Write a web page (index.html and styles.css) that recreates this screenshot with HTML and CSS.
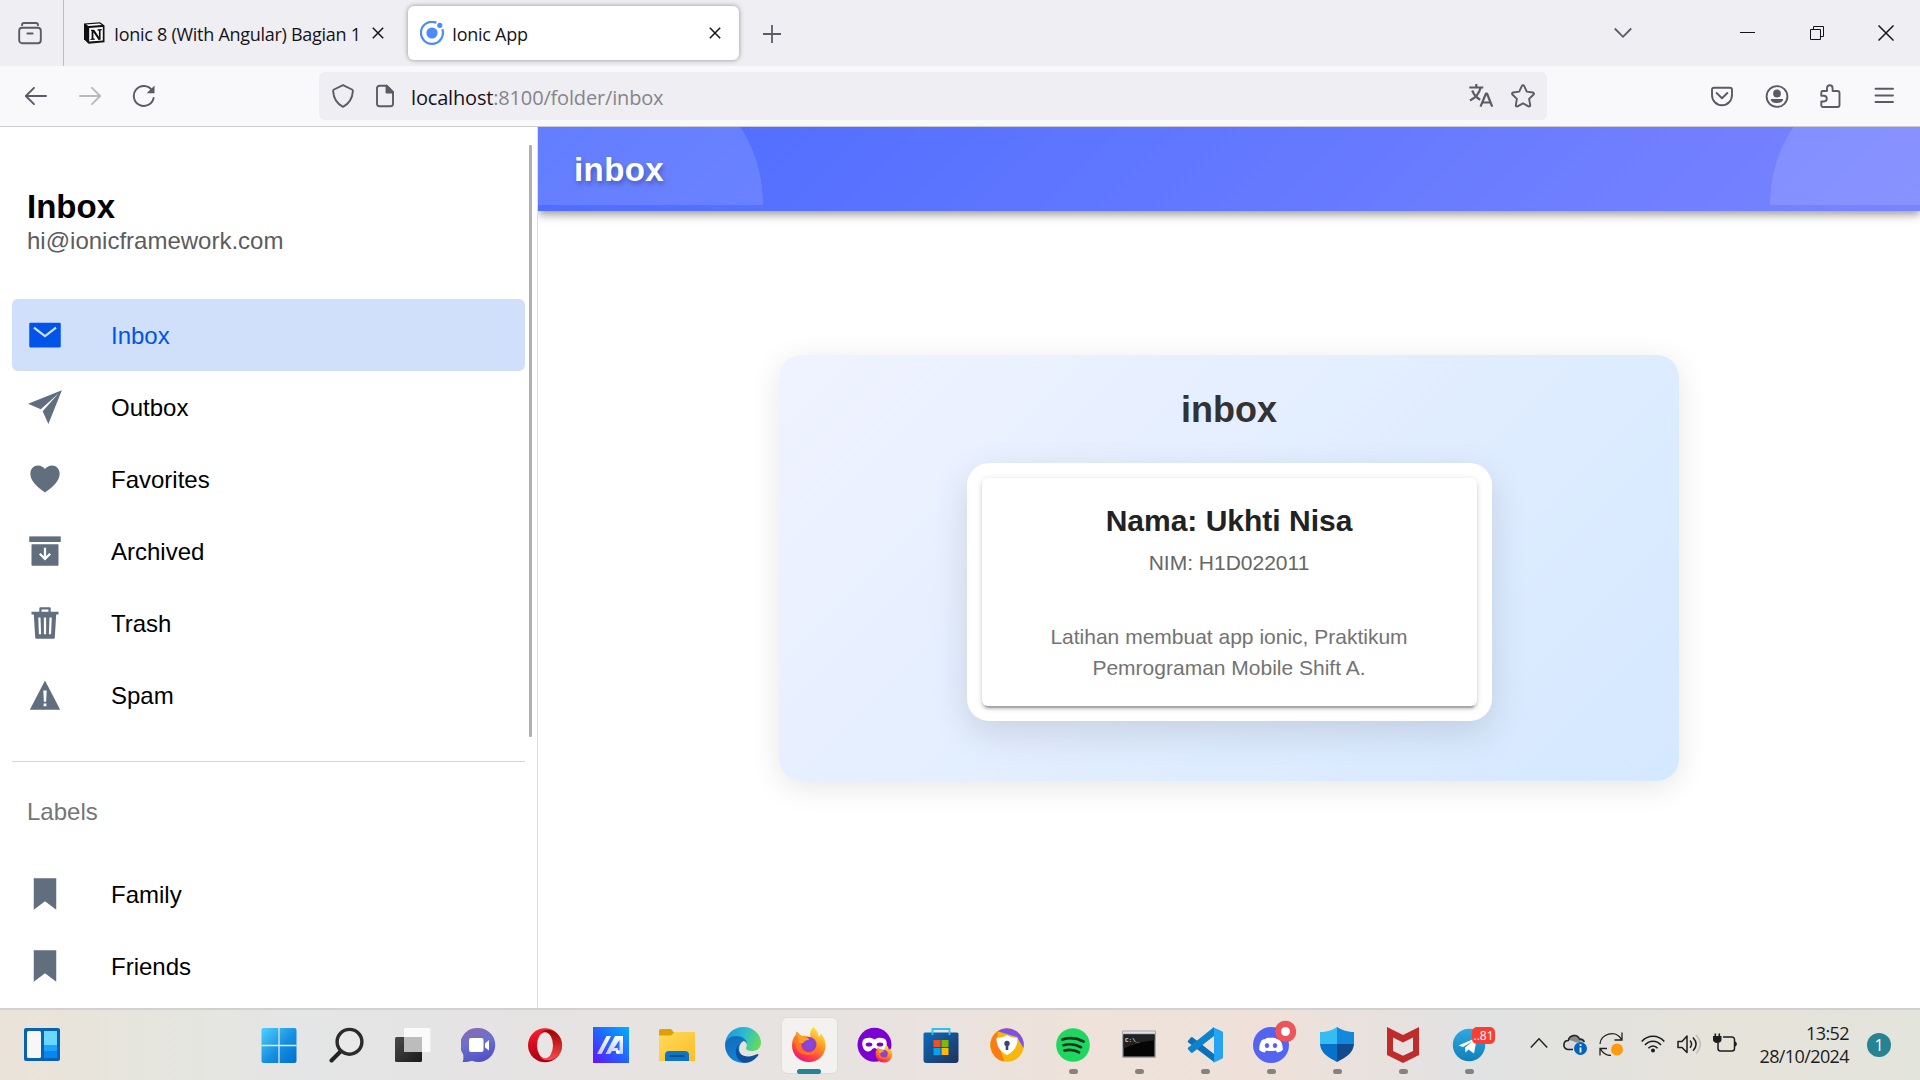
FILE: index.html
```html
<!DOCTYPE html>
<html lang="id">
<head>
<meta charset="utf-8">
<title>Ionic App</title>
<link rel="stylesheet" href="styles.css">
</head>
<body>
<div class="screen">
  <header class="tabstrip">
    <div class="view-button">
      <svg class="ic" viewBox="0 0 24 24"><path d="M4 4.200c0-1.500 .6-2.200 2-2.200h12c1.400 0 2 .7 2 2.200" /><rect x="1.200" y="6.700" width="21.600" height="15.600" rx="3"/><path d="M9.500 12.500h5" stroke-width="2.200"/></svg>
    </div>
    <div class="tab tab-notion">
      <svg class="favicon" viewBox="0 0 24 24"><path d="M2 2.500 18 1.200l4.500 3.300v16.800L6.500 22.800 2 18.300z" fill="#111"/><path d="M4 3.600 17.500 2.600l2.200 1.500L6.600 5z" fill="#fff"/><path d="M7.200 7 20.800 6.100v13.500L7.200 20.600z" fill="#fff"/><path d="M9 8.700h3.200l4.700 7V9.800l-1.400-.3V8.300l4.200-.2v1.200l-1.100.3v9.200l-2 .2-5.200-7.700v6l1.500.4v1.100l-4.400.3V18l1.100-.3V10L9 9.800z" fill="#111"/></svg>
      <span class="tab-title">Ionic 8 (With Angular) Bagian 1</span>
      <svg class="tab-close" viewBox="0 0 12 12"><path d="M.8.800l10.400 10.400M11.200.800.8 11.200"/></svg>
    </div>
    <div class="tab tab-active">
      <svg class="favicon" viewBox="0 0 24 24"><path d="M16.400 1.800A11 11 0 1 0 22.300 8.200" fill="none" stroke="#4a8bff" stroke-width="2.200"/><circle cx="12" cy="12" r="5.600" fill="#4a8bff"/><circle cx="19.800" cy="4.300" r="2.600" fill="#4a8bff"/></svg>
      <span class="tab-title">Ionic App</span>
      <svg class="tab-close" viewBox="0 0 12 12"><path d="M.8.800l10.400 10.400M11.200.800.8 11.200"/></svg>
    </div>
    <svg class="new-tab" viewBox="0 0 18 18"><path d="M9 0v18M0 9h18"/></svg>
    <div class="window-controls">
      <svg class="wc-list" viewBox="0 0 18 12"><path d="M.800 1.500 9 9.800l8.200-8.300"/></svg>
      <svg class="wc" viewBox="0 0 16 16"><path d="M0 7.500h15"/></svg>
      <svg class="wc" viewBox="0 0 16 16"><path d="M1.500 4.500h10v10h-10zM4.500 4.500v-3h10v10h-3"/></svg>
      <svg class="wc" viewBox="0 0 16 16"><path d="M.5.500l15 15M15.500.500l-15 15" stroke-width="1.500"/></svg>
    </div>
  </header>

  <nav class="toolbar">
    <div class="nav-buttons">
      <svg class="ic" viewBox="0 0 24 24"><path d="M22 12H2.500M10 3.800 1.800 12l8.200 8.200"/></svg>
      <svg class="ic disabled" viewBox="0 0 24 24"><path d="M2 12h19.500M14 3.800l8.200 8.200-8.200 8.200"/></svg>
      <svg class="ic" viewBox="0 0 24 24"><path d="M20 6.200A10 10 0 1 0 21.600 14"/><path d="M22.500 1.500v7.800h-7.800z" fill="#5b5b66" stroke="none"/></svg>
    </div>
    <div class="urlbar">
      <svg class="ic" viewBox="0 0 24 24"><path d="M12 1.200 21 5.500c.8.400 1 .8.900 1.600C21.300 14.500 18 19.800 12 22.800 6 19.800 2.700 14.500 2.100 7.100 2 6.300 2.200 5.900 3 5.500z"/></svg>
      <svg class="ic" viewBox="0 0 24 24"><path d="M14 1.800H6.500a2.500 2.500 0 0 0-2.500 2.500v15.400a2.500 2.500 0 0 0 2.500 2.500h11a2.500 2.500 0 0 0 2.500-2.500V8z"/><path d="M13.500 1.800V8.500H20z" fill="#5b5b66"/></svg>
      <span class="url"><b>localhost</b>:8100/folder/inbox</span>
      <svg class="ic translate" viewBox="0 0 24 24"><path d="M.300 3.500h14M7.300 0v3.500M11.500 4C10.200 9.500 6.500 13.800 1 16.500M3.200 6.500c1.800 4.500 4.300 7.300 8 9.200"/><path d="M11.500 22.700 17 9.500h1l5.200 13.200M13.500 18.500h8"/></svg>
      <svg class="ic" viewBox="0 0 24 24"><path d="M12 1.200c.5 0 .9.300 1.100.700l2.700 5.700 6.100.9c1 .2 1.400 1.300.7 2l-4.500 4.400 1.100 6.200c.2 1-.8 1.700-1.700 1.300L12 19.400l-5.500 3c-.900.4-1.900-.3-1.700-1.300l1.100-6.200L1.400 10.500c-.7-.7-.3-1.800.7-2l6.100-.9 2.700-5.700c.2-.4.600-.7 1.100-.7z"/></svg>
    </div>
    <div class="tool-buttons">
      <svg class="ic" viewBox="0 0 24 24"><path d="M4 3.800h16c1.300 0 2 .7 2 2V11c0 5.700-4.300 10.200-10 10.200S2 16.700 2 11V5.800c0-1.300.7-2 2-2z"/><path d="m6.600 9 5.400 5.200L17.400 9"/></svg>
      <svg class="ic account" viewBox="0 0 24 24"><circle cx="12" cy="12.500" r="10.400"/><circle cx="12" cy="9.500" r="3.900" fill="#5b5b66" stroke="none"/><path d="M5.800 15h12.400c0 2.600-2.500 4-6.200 4s-6.200-1.400-6.200-4z" fill="#5b5b66" stroke="none"/></svg>
      <svg class="ic" viewBox="0 0 24 24"><path d="M2.300 8.500c0-1 .5-1.500 1.500-1.500H8V4.200c0-1.800 1.200-3 2.800-3s2.800 1.200 2.800 3V7h4.900c1.300 0 2 .7 2 2v12c0 1.300-.7 2-2 2H3.800c-1 0-1.500-.5-1.500-1.500v-4h2.500c1.800 0 3-1.200 3-2.900s-1.200-2.900-3-2.900H2.300z"/></svg>
      <svg class="ic app-menu" viewBox="0 0 24 24"><path d="M3.500 4.800h17.500M3.500 11.500h17.500M3.500 18h17.500"/></svg>
    </div>
  </nav>

  <main class="page">
    <aside class="menu">
      <h1 class="menu-title">Inbox</h1>
      <p class="menu-note">hi@ionicframework.com</p>
      <div class="menu-item selected">
        <svg viewBox="0 0 512 512"><path fill-rule="evenodd" d="M464 80H48a16 16 0 0 0-16 16v320a16 16 0 0 0 16 16h416a16 16 0 0 0 16-16V96a16 16 0 0 0-16-16zM265.820 284.630a16 16 0 0 1-19.640 0L89.550 162.810l19.640-25.260L256 251.730l146.810-114.180 19.640 25.260z"/></svg><span>Inbox</span></div>
      <div class="menu-item">
        <svg viewBox="0 0 512 512"><path d="M496 16L15.880 208 195 289 448 64 223 317l81 179L496 16z"/></svg><span>Outbox</span></div>
      <div class="menu-item">
        <svg viewBox="0 0 512 512"><path d="M256 448l-9-6.090c-51.860-35.150-105.600-81.690-136.920-118.570C68.060 273.860 47.500 226.930 48 176c.560-61.750 48.740-112 107.400-112 48.040 0 80.380 26.650 100.600 49.500C276.220 90.650 308.560 64 356.600 64c58.660 0 106.840 50.250 107.400 112 .5 50.930-20.060 97.860-62.080 147.340C370.600 360.220 316.860 406.760 265 441.910z"/></svg><span>Favorites</span></div>
      <div class="menu-item">
        <svg viewBox="0 0 512 512"><path d="M32 48h448v80H32z"/><path fill-rule="evenodd" d="M74 160h364a10 10 0 0 1 10 10v284a10 10 0 0 1-10 10H74a10 10 0 0 1-10-10V170a10 10 0 0 1 10-10zM240 208v122l-46-46-23 23 85 85 85-85-23-23-46 46V208z"/></svg><span>Archived</span></div>
      <div class="menu-item">
        <svg viewBox="0 0 512 512"><path fill-rule="evenodd" d="M337 96V48a16 16 0 0 0-16-16H191a16 16 0 0 0-16 16v48H64v40h33l20 329a16 16 0 0 0 16 15h246a16 16 0 0 0 16-15l20-329h33V96zM207 64h98v32h-98zM169 416l-9-240h32l9 240zm71 0V176h32v240zm103 0h-32l9-240h32z"/></svg><span>Trash</span></div>
      <div class="menu-item">
        <svg viewBox="0 0 512 512"><path fill-rule="evenodd" d="M256 48 40 464h432zM276 416h-40v-40h40zM272 352h-32l-8-160h48z"/></svg><span>Spam</span></div>
      <hr class="menu-divider">
      <p class="menu-header">Labels</p>
      <div class="menu-item">
        <svg viewBox="0 0 512 512"><path d="M416 480L256 357.410 96 480V32h320z"/></svg><span>Family</span></div>
      <div class="menu-item">
        <svg viewBox="0 0 512 512"><path d="M416 480L256 357.410 96 480V32h320z"/></svg><span>Friends</span></div>
      <div class="scroll-thumb"></div>
    </aside>
    <section class="content">
      <div class="app-header">
        <div class="app-toolbar"><h1 class="app-title">inbox</h1></div>
      </div>
      <div class="card-outer">
        <h2 class="card-heading">inbox</h2>
        <div class="card-frame">
          <div class="card">
            <h3 class="name">Nama: Ukhti Nisa</h3>
            <p class="nim">NIM: H1D022011</p>
            <p class="desc">Latihan membuat app ionic, Praktikum<br>Pemrograman Mobile Shift A.</p>
          </div>
        </div>
      </div>
    </section>
  </main>

  <footer class="taskbar">
    <svg width="0" height="0" class="defs">
      <defs>
        <linearGradient id="win" x1="0" y1="0" x2="1" y2="1"><stop offset="0" stop-color="#4fd0ff"/><stop offset=".55" stop-color="#168ee0"/><stop offset="1" stop-color="#0070cf"/></linearGradient>
        <linearGradient id="dark" x1="0" y1="0" x2="1" y2="1"><stop offset="0" stop-color="#4a4a4a"/><stop offset="1" stop-color="#1a1a1a"/></linearGradient>
        <linearGradient id="chat" x1=".2" y1="0" x2=".5" y2="1"><stop offset="0" stop-color="#8b69ae"/><stop offset=".45" stop-color="#6b71cf"/><stop offset="1" stop-color="#5150c6"/></linearGradient>
        <linearGradient id="operaO" x1="0" y1="0" x2="0" y2="1"><stop offset="0" stop-color="#ff1b2d"/><stop offset="1" stop-color="#a70014"/></linearGradient>
        <linearGradient id="operaI" x1="0" y1="0" x2="0" y2="1"><stop offset="0" stop-color="#9c0000"/><stop offset="1" stop-color="#ff4b4b"/></linearGradient>
        <linearGradient id="ma" x1="0" y1="1" x2="1" y2="0"><stop offset="0" stop-color="#6412ff"/><stop offset=".5" stop-color="#2264ff"/><stop offset="1" stop-color="#00b0ff"/></linearGradient>
        <linearGradient id="maw" x1="0" y1="0" x2="0" y2="1"><stop offset="0" stop-color="#fff"/><stop offset="1" stop-color="#c6c8ff"/></linearGradient>
        <linearGradient id="folder" x1="0" y1="0" x2="1" y2="1"><stop offset="0" stop-color="#ffdb5c"/><stop offset="1" stop-color="#fcbd26"/></linearGradient>
        <linearGradient id="edgeA" x1="0" y1=".3" x2="1" y2=".6"><stop offset="0" stop-color="#1f94db"/><stop offset=".5" stop-color="#2cbcd0"/><stop offset="1" stop-color="#66dd58"/></linearGradient>
        <linearGradient id="edgeB" x1="0" y1="0" x2=".5" y2="1"><stop offset="0" stop-color="#1766b4"/><stop offset="1" stop-color="#0a87dc"/></linearGradient>
        <linearGradient id="fox" x1=".8" y1="0" x2=".25" y2="1"><stop offset="0" stop-color="#fff04a"/><stop offset=".4" stop-color="#ff9a1f"/><stop offset=".75" stop-color="#ff3e47"/><stop offset="1" stop-color="#e3127c"/></linearGradient>
        <radialGradient id="foxp"><stop offset="0" stop-color="#7a4dea"/><stop offset="1" stop-color="#9a3bc0"/></radialGradient>
        <linearGradient id="store" x1="0" y1="0" x2="1" y2="1"><stop offset="0" stop-color="#0b6bbd"/><stop offset="1" stop-color="#20325c"/></linearGradient>
        <linearGradient id="tele" x1="0" y1="0" x2="0" y2="1"><stop offset="0" stop-color="#2fa9e4"/><stop offset="1" stop-color="#0f7fb9"/></linearGradient>
      </defs>
      <symbol id="firefox" viewBox="0 0 36 36">
        <path d="M22.500 0c4 3.500 5 7 5 9.500 1 0 2.200-1.300 2.500-3 3 3.500 4.500 7 4.500 12C34.500 28 27.500 35 18 35S1 28 1 18.500C1 14 2.500 10.500 4.500 8l1-3.500 5 4.500c3.500-.7 7 0 9 1.500-1-4.500 0-8 3-10.500z" fill="url(#fox)"/>
        <circle cx="18" cy="17.500" r="7.500" fill="url(#foxp)"/>
        <path d="M1.500 14C3 10.500 7 8.500 12 9.500c3 .6 5 2 6 3.500-2.500 0-4.500 1-5.500 3-1.700.3-2.500.8-2.700 2.500.2 4 3.700 7 8.200 7s8-3 8-7.500c1.500 5-2 10-8.500 10C9 28 4 23 4.500 17z" fill="#ff7b21" opacity=".8"/>
        <path d="M5.500 4.500 10.500 9c2.500 1 6 1 8 3.500-4 .5-6 1.500-6.500 3.500H8z" fill="#ffa02b"/>
      </symbol>
    </svg>
    <div class="widgets">
      <svg class="task-icon" viewBox="0 0 36 36"><rect y="1" width="36" height="33" rx="2" fill="#0861b2"/><rect x="3" y="4" width="14" height="27" rx="1.500" fill="#f7f7f7"/><path d="M20 4h13v14H20z" fill="#68d8ff"/><path d="M20 18h13v6H20z" fill="#1ba4fa"/><path d="M20 24h13v7H20z" fill="#0a86ee"/></svg>
    </div>
    <div class="task-apps">
      <div class="task start"><svg class="task-icon" viewBox="0 0 36 36"><rect x=".500" y="1" width="35" height="35" rx="2" fill="url(#win)"/><path d="M18 1v35M.5 18.500h35" stroke="#dfeaf1" stroke-width="1.300"/></svg></div>
      <div class="task"><svg class="task-icon" viewBox="0 0 36 36"><path d="m11.500 24.500-9 9" stroke="#222" stroke-width="4" stroke-linecap="round"/><circle cx="20.500" cy="14.800" r="12.400" fill="#e9e9ea" stroke="#2b2b2b" stroke-width="3.400"/></svg></div>
      <div class="task"><svg class="task-icon" viewBox="0 0 36 36"><rect x="0" y="10" width="27" height="25" rx="1.500" fill="url(#dark)"/><rect x="9" y="1" width="26.500" height="24" rx="1.500" fill="#fff" fill-opacity=".82"/><path d="M9 10h18v15H9z" fill="#bcbcbc"/></svg></div>
      <div class="task"><svg class="task-icon" viewBox="0 0 36 36"><path d="M18 1a17 17 0 1 1-7 32.800c-3 1.100-6 1.300-9.500 1.200 1.200-3 1-5 .7-7.500A17 17 0 0 1 18 1z" fill="url(#chat)"/><rect x="8" y="11" width="14.500" height="14" rx="2" fill="#fff"/><path d="M24 16.500 28 13v10.500L24 20.500z" fill="#fff"/></svg></div>
      <div class="task"><svg class="task-icon" viewBox="0 0 36 36"><ellipse cx="18" cy="18.200" rx="17" ry="17" fill="url(#operaO)"/><path d="M12.500 7C20-2 35 5 35 18.200S20 38 12.500 29.500C19 34 25 27 25 18.200S19 2.500 12.500 7z" fill="url(#operaI)"/><ellipse cx="18" cy="18.200" rx="8" ry="13" fill="#e8e5e4"/></svg></div>
      <div class="task"><svg class="task-icon" viewBox="0 0 36 36"><path d="M0 0h36v36H0z" fill="url(#ma)"/><path d="M4 27 13.500 9h4.500L8.500 27zM12.500 27 22 9h8v17a1 1 0 0 1-1 1h-5l2.500-4V13L17 27z" fill="url(#maw)"/><path d="M20 21h5v3h-6.500z" fill="#dcdcff"/><circle cx="24.800" cy="25" r="2" fill="#fff"/></svg></div>
      <div class="task"><svg class="task-icon" viewBox="0 0 36 36"><path d="M0 4a2 2 0 0 1 2-2h10l3 3.500h19a2 2 0 0 1 2 2V12H0z" fill="#dfa000"/><path d="M0 8.500h12L15.500 5H35a1 1 0 0 1 1 1v28H0z" fill="url(#folder)"/><path d="M6 34v-6a4 4 0 0 1 4-4h16a4 4 0 0 1 4 4v6z" fill="#0d75c9"/><path d="M11 29h14" stroke="#114678" stroke-width="1.600" stroke-linecap="round"/></svg></div>
      <div class="task"><svg class="task-icon" viewBox="0 0 36 36"><path d="M0 18C0 8 8 0 18.500 0 29 0 36 8 36 15.500c0 5-3.500 8.500-8.500 8.500-4.500 0-7-1.500-6.500-3 1.500-1.800 1-5-2-7-6-4-15-3-19 4z" fill="url(#edgeA)"/><path d="M0 18C1 12 6 9 11 9c6 0 11 3 11 8.500 0-2-2-3.500-3.500-3.500-4 2-7 9-1 15.500 4 4 4 5.500 3 6.200C8 37 0 28 0 18z" fill="url(#edgeB)"/><path d="M15.500 16C10 21 14 30 24 29.500c4 0 7-2.500 8.500-2.500 1 0 1.200.7.500 1.700C28 35 22 36.500 17.500 35.500 10 32 8 21 15.500 16z" fill="#10509b"/></svg></div>
      <div class="task active"><svg class="task-icon"><use href="#firefox"/></svg><i class="pill"></i></div>
      <div class="task"><svg class="task-icon" viewBox="0 0 36 36"><circle cx="17.500" cy="17.800" r="17" fill="#7d00d2"/><path d="M17.500 12.500c3-2.500 7-2 9.500-1 2 .8 3 3 2.700 6-.5 4.500-3 7-6 7s-4-3.500-6.200-3.500-3.200 3.500-6.200 3.500-5.500-2.500-6-7c-.3-3 .7-5.200 2.700-6 2.500-1 6.500-1.500 9.500 1z" fill="#fff"/><ellipse cx="12" cy="17.500" rx="3.300" ry="2" fill="#7d00d2"/><ellipse cx="23" cy="17.500" rx="3.300" ry="2" fill="#7d00d2"/><use href="#firefox" x="18" y="18" width="18" height="18"/></svg></div>
      <div class="task"><svg class="task-icon" viewBox="0 0 36 36"><path d="M.5 7a1.500 1.500 0 0 1 1.500-1.500h32A1.500 1.500 0 0 1 35.500 7v26a3 3 0 0 1-3 3h-29a3 3 0 0 1-3-3z" fill="url(#store)"/><path d="M9.500 8V2h17v6" fill="none" stroke="#26c3f3" stroke-width="1.800"/><path d="M10.500 13h7v7h-7z" fill="#f25022"/><path d="M18.500 13h7v7h-7z" fill="#7fba00"/><path d="M10.500 21h7v7h-7z" fill="#00a4ef"/><path d="M18.500 21h7v7h-7z" fill="#ffb900"/></svg></div>
      <div class="task"><svg class="task-icon" viewBox="0 0 36 36"><circle cx="18" cy="18" r="16.800" fill="#f6b80c"/><path d="M9 4A16.800 16.800 0 0 0 15 34.500L8 12z" fill="#ff7a13"/><path d="M8.500 4.200A16.800 16.800 0 0 1 34.500 21L28 10z" fill="#7b4ff0"/><path d="M18 8c3 2 6 3 10.500 2.700C29 18 25 25 18 28 11 25 7 18 7.500 10.700 12 11 15 10 18 8z" fill="#fff"/><circle cx="18" cy="16.500" r="2.700" fill="#3b4370"/><path d="M16.700 17h2.600v6h-2.600z" fill="#3b4370"/></svg></div>
      <div class="task"><svg class="task-icon" viewBox="0 0 36 36"><circle cx="18" cy="18" r="16.800" fill="#1ed760"/><path d="M7.500 12.500c7-2.200 14.500-1.500 21 2M8.500 18.200c6-1.700 12-1 17.500 2M9.500 23.500c5-1.300 10-.7 14.500 1.800" fill="none" stroke="#14321d" stroke-width="2.700" stroke-linecap="round"/></svg><i class="dot"></i></div>
      <div class="task"><svg class="task-icon" viewBox="0 0 36 36"><rect x="1" y="3.500" width="34" height="27.500" rx="1" fill="#a4a7ac"/><path d="M2 4.500h32v2H2z" fill="#dfe2e6"/><path d="M2.500 7.500h31v22h-31z" fill="#050505"/><path d="M2.500 7.500h31v6C22 14 9 18 2.500 22z" fill="#222"/><text x="4" y="14.500" class="cmd-text">C:\_</text></svg><i class="dot"></i></div>
      <div class="task"><svg class="task-icon" viewBox="0 0 36 36"><path d="m1.300 13.500 2.500-3a1.500 1.500 0 0 1 2-.100L27 27v8L1.300 15.500c-.8-.7-.7-1.400 0-2z" fill="#0a72b8"/><path d="m1.300 22.500 2.500 3a1.500 1.500 0 0 0 2 .1L27 9V0L1.300 20.500c-.8.700-.7 1.400 0 2z" fill="#0d83cc"/><path d="M26 .3 34.500 4c1 .5 1.500 1 1.500 2v24c0 1-.5 1.500-1.500 2L26 36c.6-.5 1-1 1-2V2c0-.8-.3-1.300-1-1.700z" fill="#27a3f3"/></svg><i class="dot"></i></div>
      <div class="task"><svg class="task-icon" viewBox="0 0 36 36"><circle cx="18" cy="18" r="18" fill="#5563f2"/><path d="M13.500 11c3-.5 6-.5 9 0l1 1c2 .4 3.300.8 4 1.400 1.700 3 2.500 6.500 2.200 9.600-1.700 1.500-3.500 2.200-5.500 2.400l-1.500-1.900c-3 .7-6.500.7-9.500 0l-1.400 1.900c-2-.2-3.800-.9-5.500-2.400-.3-3.300.5-6.600 2.200-9.600.7-.6 2-1 4-1.400z" fill="#fff"/><ellipse cx="14" cy="18.500" rx="2.200" ry="2.500" fill="#5563f2"/><ellipse cx="22" cy="18.500" rx="2.200" ry="2.500" fill="#5563f2"/></svg><i class="record"></i><i class="dot"></i></div>
      <div class="task"><svg class="task-icon" viewBox="0 0 36 36"><path d="M18 0c5 3.500 10 5 17 5v12H1V5c7 0 12-1.500 17-5z" fill="#35bdf3"/><path d="M18 0c5 3.500 10 5 17 5v12H18z" fill="#1389dc"/><path d="M1 17h17v18C8 30 1.500 25 1 17z" fill="#0572cc"/><path d="M35 17H18v18c10-5 16.500-10 17-18z" fill="#124a8e"/></svg><i class="dot"></i></div>
      <div class="task"><svg class="task-icon" viewBox="0 0 36 36"><path d="m2 0 16 8 16-8v28l-16 8-16-8zM8 10.500V24l10 4.700L28 24V10.500l-10 5z" fill="#c02b2c" fill-rule="evenodd"/></svg><i class="dot"></i></div>
      <div class="task"><svg class="task-icon" viewBox="0 0 36 36"><circle cx="18" cy="18" r="16.200" fill="url(#tele)"/><path d="m7.500 18.500 18.500-8-3 16-5.500-4-3 3-.5-5 8-6.500-10 6z" fill="#fff"/></svg><b class="badge">..81</b><i class="dot"></i></div>
    </div>
    <div class="tray">
      <svg class="tray-chevron" viewBox="0 0 18 12"><path d="M.8 10.500 9 1.800l8.200 8.700"/></svg>
      <svg class="tray-icon t-cloud" viewBox="0 0 24 24"><path d="M3.500 17.500h9l8-8c-1-2-2.500-2.500-4-2.300C15 3.500 10.500 2 7.500 4.500 6 5.700 5.500 7 5.300 8.500 2 8.700.5 11 .7 13.300c.2 2.200 1.300 3.700 2.800 4.200z" fill="#d9d9d9"/><path d="M5.500 8c1.500-4.500 8.500-6 11-1 2-.3 3.500.5 4.500 3-5-1.500-6 1.500-9 0-2-1-4-2-6.500-2z" fill="#8a8a8a"/><path d="M10 17.500H5C-.5 17.500-.500 8.500 5.300 8.500c1-5.500 8.700-7 11.200-1.500 2-.3 4 .7 4.800 3" fill="none" stroke="#222" stroke-width="1.600"/><circle cx="17.500" cy="16.500" r="6.500" fill="#0562bd"/><path d="M17.500 15.500v5M17.500 12.300v1.700" stroke="#fff" stroke-width="1.800"/></svg>
      <svg class="tray-icon t-sync" viewBox="0 0 24 24"><path d="M1 12C1 2 17-3 22.500 7.500M23 .5v7.500h-7.500M1 23.500V16.500h7M1.500 17c2.500 4.500 6 6.500 10.500 6.500" fill="none" stroke="#222" stroke-width="1.300"/><circle cx="18" cy="17.500" r="6" fill="#ff9b0a"/></svg>
      <svg class="tray-icon t-wifi" viewBox="0 0 24 24"><path d="M.7 9.500c6.300-7 16.300-7 22.600 0M4 13c4.500-5 11.500-5 16 0M7.400 16.300c2.700-3 6.500-3 9.200 0" fill="none" stroke="#1d1d1d" stroke-width="1.600"/><circle cx="12" cy="18.500" r="2" fill="#1d1d1d"/></svg>
      <svg class="tray-icon t-sound" viewBox="0 0 24 24"><path d="M1 9.500h4l5-5.500v16.500L5 15.500H1z" fill="none" stroke="#1d1d1d" stroke-width="1.500" stroke-linejoin="round"/><path d="M13 8.500c2 2.300 2 5 0 7.300M16 5.500c4 4.300 4 9 0 13.300" fill="none" stroke="#1d1d1d" stroke-width="1.500"/><path d="M19 3c5.500 6 5.500 12.500 0 18.500" fill="none" stroke="#bcbcb8" stroke-width="1.400"/></svg>
      <svg class="tray-icon" viewBox="0 0 24 24"><path d="M10 5h9a2.500 2.500 0 0 1 2.500 2.500v9A2.500 2.500 0 0 1 19 19H7.500c-2 0-2.500-1-2.500-2.500V11" fill="none" stroke="#1d1d1d" stroke-width="1.500"/><path d="M0 4h8.500v3.500c0 2.200-1.500 3.500-4.200 3.500S0 9.700 0 7.500zM1.500 1.500h1.600V4H1.500zM5.500 1.500h1.600V4H5.500zM22 9.500c2.500.5 2.500 4.500 0 5z" fill="#1d1d1d"/></svg>
      <div class="clock"><span>13:52</span><span>28/10/2024</span></div>
      <span class="count">1</span>
    </div>
  </footer>
</div>
</body>
</html>
```
FILE: styles.css
```css
* { box-sizing: border-box; }
body { margin: 0; font-family: "Liberation Sans", Arial, sans-serif; }
h1, h2, h3, p { margin: 0; }
svg { display: block; flex: none; }
.screen { display: flex; flex-direction: column; width: 1920px; height: 1080px; overflow: hidden; background: #fff; }

/* browser tabs */
.tabstrip { display: flex; align-items: center; height: 66px; background: #efeef3; font: 18px "Open Sans", "Noto Sans", sans-serif; color: #15141a; }
.ic { width: 24px; height: 24px; fill: none; stroke: #5b5b66; stroke-width: 1.9; stroke-linecap: round; stroke-linejoin: round; }
.view-button { display: flex; align-items: center; width: 64px; height: 66px; padding-left: 18px; border-right: 1px solid #bdbcc3; }
.tab { display: flex; align-items: center; height: 54px; }
.tab-notion { width: 344px; padding-left: 18px; }
.favicon { width: 24px; height: 24px; margin-right: 8px; }
.tab-title { flex: none; padding-top: 1px; white-space: nowrap; letter-spacing: -0.28px; }
.tab-close { width: 12px; height: 12px; margin-left: auto; fill: none; stroke: #15141a; stroke-width: 1.5; }
.tab-notion .tab-close { margin-right: 24px; }
.tab-active { width: 331px; padding: 0 18px 0 12px; border-radius: 6px; background: #fff; box-shadow: 0 0 5px rgba(0, 0, 0, .4); }
.new-tab { width: 18px; height: 18px; margin: 1px 0 0 24px; fill: none; stroke: #5b5b66; stroke-width: 1.8; }
.window-controls { display: flex; align-items: center; gap: 53px; margin-left: auto; padding-right: 26px; }
.window-controls svg { fill: none; stroke: #15141a; stroke-width: 1; }
.window-controls .wc-list { width: 18px; height: 12px; margin-right: 55px; stroke: #5b5b66; stroke-width: 1.8; }
.wc { width: 16px; height: 16px; }

/* browser toolbar */
.toolbar { display: flex; align-items: center; height: 61px; background: #f9f9fb; border-bottom: 1px solid #cccccf; }
.nav-buttons { display: flex; gap: 30px; width: 319px; padding-left: 24px; }
.disabled { opacity: .4; }
.urlbar { display: flex; align-items: center; width: 1228px; height: 48px; padding: 0 12px; gap: 18px; border-radius: 6px; background: #efeef3; }
.url { flex: 1; margin-left: -4px; padding-top: 2px; font: 20px "Open Sans", "Noto Sans", sans-serif; color: #85848b; letter-spacing: -0.17px; white-space: nowrap; }
.url b { font-weight: 400; color: #15141a; }
.translate { stroke-width: 2.2; stroke-linecap: butt; }
.tool-buttons { display: flex; gap: 30px; margin-left: auto; padding-right: 24px; }
.account { margin-left: 1px; }
.app-menu { margin-left: -1px; }

/* page */
.page { display: flex; height: 881px; }
.menu { position: relative; width: 538px; padding: 60px 12px 0; border-right: 1px solid #dedede; overflow: hidden; }
.menu-title { height: 41px; padding-left: 15px; font-size: 33px; line-height: 39px; color: #000; }
.menu-note { height: 71px; padding-left: 15px; font-size: 24px; line-height: 26px; color: #5c5c5f; }
.menu-item { display: flex; align-items: center; gap: 48px; height: 72px; padding-left: 15px; border-radius: 6px; font-size: 24px; color: #000; }
.menu-item span { padding-top: 2px; }
.menu-item svg { width: 36px; height: 36px; fill: #616e7e; }
.selected { background: #d0e0fb; color: #0054e9; }
.selected svg { fill: #0054e9; }
.menu-divider { height: 1px; margin: 30px 0 0; border: 0; background: #d6d6d6; }
.menu-header { height: 96px; padding: 36px 0 0 15px; font-size: 24px; line-height: 28px; color: #757575; }
.scroll-thumb { position: absolute; top: 18px; right: 5px; width: 3px; height: 592px; border-radius: 1px; background: #b0b0b0; }
.content { flex: 1; display: flex; flex-direction: column; align-items: center; background: #fff; }
.app-header { align-self: stretch; height: 84px; background: linear-gradient(135deg, #4d6cff, #7984ff); box-shadow: 0 3px 6px -1.500px rgba(0, 0, 0, .2), 0 6px 7.500px rgba(0, 0, 0, .14), 0 1.500px 15px rgba(0, 0, 0, .12); clip-path: inset(0 0 -40px 0); }
.app-toolbar { display: flex; align-items: center; height: 78px; padding: 8px 0 0 36px; background: radial-gradient(circle at 85px 76px, rgba(255, 255, 255, .12) 139.5px, transparent 140px), radial-gradient(circle at 1368px 76px, rgba(255, 255, 255, .12) 135.500px, transparent 136px); }
.app-title { font-size: 33px; line-height: 40px; letter-spacing: 0.4px; color: #fff; text-shadow: 1.500px 3px 5px rgba(0, 0, 0, .3); }
.card-outer { display: flex; flex-direction: column; align-items: center; width: 900px; height: 426px; margin-top: 144px; border-radius: 22px; background: linear-gradient(135deg, #f0f3ff, #d4e8ff); box-shadow: 0 6px 30px rgba(0, 0, 0, .1); }
.card-heading { height: 108px; padding-top: 34px; font-size: 36px; line-height: 42px; color: #333; }
.card-frame { width: 525px; height: 258px; padding: 15px; border-radius: 22px; background: #fff; box-shadow: 0 12px 36px rgba(0, 0, 0, .12); }
.card { height: 228px; padding-top: 25px; border-radius: 6px; background: #fff; text-align: center; box-shadow: 0 4.500px 1.500px -3px rgba(0, 0, 0, .2), 0 3px 3px rgba(0, 0, 0, .14), 0 1.500px 7.500px rgba(0, 0, 0, .12); }
.name { font-size: 30px; line-height: 36px; color: #222; }
.nim { margin-top: 11px; font-size: 21px; line-height: 26px; color: #666; }
.desc { margin-top: 45px; font-size: 21px; line-height: 31px; color: #737373; }

/* taskbar */
.taskbar { position: relative; display: flex; align-items: center; height: 72px; border-top: 2px solid #d0d0cf; background: linear-gradient(90deg, #ebe3d9, #e6e5dd 7%, #e4e5e6 16%, #e6e3e2 30%, #e8e3e1 45%, #eee2da 56%, #efe1d9 66%, #e1e2e3 77%, #e3e2de 82%, #e6e3da 90%, #e3e4dc); }
.defs { position: absolute; }
.widgets { width: 246px; padding-left: 24px; }
.task-icon { width: 36px; height: 36px; }
.task-apps { display: flex; }
.task { position: relative; display: flex; align-items: center; justify-content: center; width: 66px; height: 70px; }
.start { margin-right: 2px; }
.active::before { content: ""; position: absolute; inset: 7px 4.500px 6px; border-radius: 6px; border: 1px solid #dedbd9; background: #f4f2f1; }
.active .task-icon { position: relative; }
.pill, .dot { position: absolute; bottom: 6px; height: 5px; border-radius: 3px; }
.pill { width: 24px; background: #268391; }
.dot { width: 9px; background: #858280; }
.record { position: absolute; top: 11px; right: 8px; width: 21px; height: 21px; border: 6px solid #ee5558; border-radius: 50%; background: #fff; box-shadow: 0 0 1px #863d3d; }
.badge { position: absolute; top: 17px; right: 7px; width: 23px; height: 17px; border-radius: 5px; background: #f93e35; color: #fff; font: 12px/17px "Open Sans", sans-serif; text-align: center; }
.cmd-text { font: bold 6px "Liberation Mono", monospace; fill: #ddd; }
.tray { display: flex; align-items: center; margin-left: auto; padding-right: 29px; }
.tray-chevron { width: 18px; height: 12px; margin: 0 15px 4px 0; fill: none; stroke: #222; stroke-width: 1.5; }
.tray-icon { width: 24px; height: 24px; margin-bottom: 2px; }
.t-cloud, .t-sound { margin-right: 12px; }
.t-sync { margin-right: 18px; }
.t-wifi { margin-right: 12px; }
.clock { display: flex; flex-direction: column; align-items: flex-end; width: 112px; padding-bottom: 1px; font: 18px/23px "Open Sans", "Noto Sans", sans-serif; color: #1c1c1c; letter-spacing: -0.6px; }
.count { width: 24px; height: 24px; margin-left: 18px; border-radius: 50%; background: #268391; color: #fff; font: 16px/24px "Open Sans", sans-serif; text-align: center; }
```
